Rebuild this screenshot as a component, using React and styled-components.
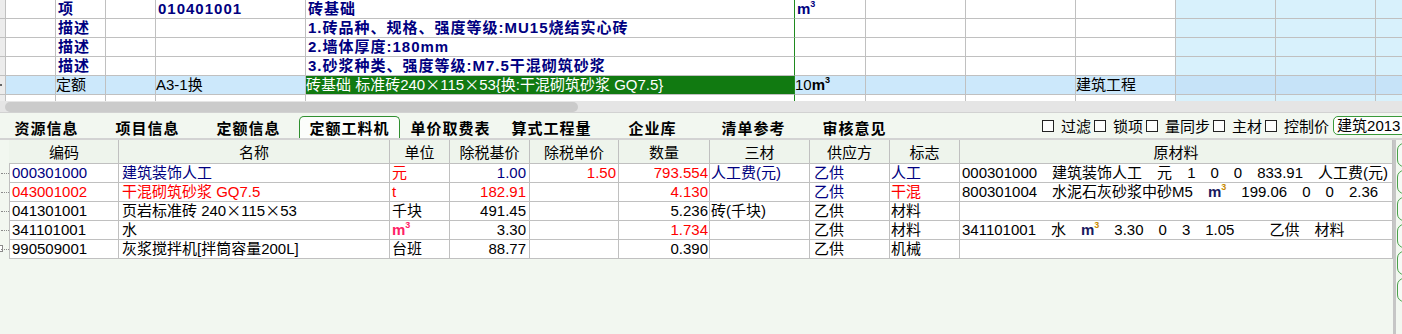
import React from 'react';
import styled, { createGlobalStyle } from 'styled-components';

const FONT = `"Liberation Sans", "Noto Sans CJK SC", sans-serif`;
const NAVY = '#000080';
const RED = '#ff0000';
const LINE = '#c0c0c0';
const PANEL = '#f2f7f0';

const GlobalStyle = createGlobalStyle`
  html, body { margin: 0; padding: 0; background: ${PANEL}; }
  body { width: 1402px; height: 334px; overflow: hidden; font-family: ${FONT}; }
`;

const Root = styled.div`
  width: 1402px;
  height: 334px;
  overflow: hidden;
  display: flex;
  flex-direction: column;
  background: ${PANEL};
  font-family: ${FONT};
  font-size: 15px;
  color: #000;
`;

const Wide = styled.span`
  font-family: "Noto Sans CJK SC", sans-serif;
  line-height: 1;
`;

/* ---------- top grid ---------- */
const TopGrid = styled.div`
  height: 101px;
  flex-shrink: 0;
  overflow: hidden;
  background: #fff;
  display: flex;
  flex-direction: column;
`;

const GridRow = styled.div`
  display: flex;
  height: 19px;
  flex-shrink: 0;
`;

const RowHead = styled.div`
  width: 6px;
  flex-shrink: 0;
  box-sizing: border-box;
  background: #ececec;
  border-right: 1px solid ${LINE};
  border-bottom: 1px solid ${LINE};
  position: relative;
`;

const RowDot = styled.span`
  position: absolute;
  left: 0;
  top: 8px;
  width: 2px;
  height: 2px;
  background: #666;
`;

const cellBg = (p) => {
  if (p.$highlight) return '#117a11';
  if (p.$selected && p.$blue) return '#c6e3f8';
  if (p.$selected) return '#cce8fb';
  if (p.$blue) return '#d8f1fc';
  return '#fff';
};

const GridCell = styled.div`
  width: ${(p) => p.$w}px;
  flex-shrink: 0;
  box-sizing: border-box;
  padding-left: ${(p) => (p.$selected ? 0 : 2)}px;
  border-right: 1px solid ${(p) => (p.$greenEdge ? '#1f8a1f' : LINE)};
  border-bottom: 1px solid ${LINE};
  background: ${cellBg};
  color: ${(p) => (p.$highlight ? '#fff' : p.$bold ? NAVY : '#000')};
  font-weight: ${(p) => (p.$bold ? 700 : 400)};
  letter-spacing: ${(p) => (p.$bold ? '1px' : '0')};
  line-height: 18px;
  white-space: nowrap;
`;

const Cubic = styled.span`
  font-weight: 700;
  color: ${(p) => p.$c};
  letter-spacing: 0;
  & sup {
    font-size: 9px;
    line-height: 1;
    vertical-align: top;
    color: ${(p) => p.$sc || p.$c};
  }
`;

/* ---------- scroll bar ---------- */
const HScroll = styled.div`
  height: 12px;
  flex-shrink: 0;
  background: #e5e5e5;
  border-bottom: 1px solid #d2d2d2;
  box-sizing: border-box;
  display: flex;
  align-items: center;
  padding-left: 5px;
`;

const Thumb = styled.div`
  width: 573px;
  height: 10px;
  border-radius: 5px;
  background: #cbcbcb;
`;

/* ---------- tab bar ---------- */
const TabBar = styled.div`
  height: 25px;
  flex-shrink: 0;
  display: flex;
  align-items: flex-end;
  background: ${PANEL};
`;

const Tab = styled.div`
  width: 101px;
  flex-shrink: 0;
  height: 22px;
  box-sizing: border-box;
  display: flex;
  align-items: center;
  justify-content: center;
  font-family: "Noto Sans CJK SC", sans-serif;
  font-weight: 700;
  letter-spacing: 1px;
  border: 1px solid ${(p) => (p.$active ? '#2f8f2f' : 'transparent')};
  border-bottom: none;
  border-radius: 5px 5px 0 0;
  background: ${(p) => (p.$active ? '#fbfdfb' : 'transparent')};
  &:first-child { margin-left: -4px; }
`;

const Options = styled.div`
  display: flex;
  align-items: center;
  flex-shrink: 0;
  height: 25px;
  margin-left: 137px;
  gap: 3px;
`;

const Option = styled.label`
  display: flex;
  align-items: center;
  gap: 7px;
  white-space: nowrap;
`;

const Box = styled.span`
  width: 12px;
  height: 12px;
  box-sizing: border-box;
  border: 1px solid #222;
  background: #fdfefd;
`;

const SelectBox = styled.div`
  margin-left: 1px;
  width: 90px;
  height: 19px;
  box-sizing: border-box;
  flex-shrink: 0;
  border: 1px solid #3a9a3a;
  border-radius: 5px;
  padding-left: 3px;
  line-height: 17px;
  background: #fff;
  white-space: nowrap;
`;

const Divider = styled.div`
  height: 2px;
  flex-shrink: 0;
  background: #d3d3d3;
`;

/* ---------- lower table ---------- */
const Lower = styled.div`
  flex: 1;
  min-height: 0;
  display: flex;
`;

const Gutter = styled.div`
  width: 9px;
  flex-shrink: 0;
  padding-top: 24px;
  display: flex;
  flex-direction: column;
`;

const GutterMark = styled.div`
  height: 19px;
  position: relative;
  &::after {
    content: '';
    position: absolute;
    left: 1px;
    right: 0;
    top: 9px;
    border-top: 1px dotted #8a8a8a;
  }
`;

const Expander = styled.span`
  position: absolute;
  left: -4px;
  top: 5px;
  width: 7px;
  height: 7px;
  box-sizing: border-box;
  border: 1px solid #8a8a8a;
  background: #fff;
`;

const Table = styled.div`
  width: 1384px;
  flex-shrink: 0;
  display: flex;
  flex-direction: column;
`;

const HeadRow = styled.div`
  display: flex;
  height: 24px;
  box-sizing: border-box;
  border-bottom: 1px solid ${LINE};
  background: #eef4ec;
  padding-left: 1px;
`;

const HeadCell = styled.div`
  width: ${(p) => p.$w}px;
  flex-shrink: 0;
  box-sizing: border-box;
  border-right: 1px solid ${LINE};
  display: flex;
  align-items: center;
  justify-content: center;
  white-space: nowrap;
`;

const DataRow = styled.div`
  display: flex;
  height: 19px;
  box-sizing: border-box;
  border-left: 1px solid ${LINE};
  border-bottom: 1px solid ${LINE};
  background: #fff;
`;

const DataCell = styled.div`
  width: ${(p) => p.$w}px;
  flex-shrink: 0;
  box-sizing: border-box;
  border-right: 1px solid ${LINE};
  padding: 0 ${(p) => p.$pr}px 0 ${(p) => p.$pl}px;
  text-align: ${(p) => p.$align};
  color: ${(p) => p.$color};
  line-height: 18px;
  white-space: nowrap;
  overflow-x: ${(p) => (p.$clip ? 'clip' : 'visible')};
`;

const RawLine = styled.div`
  display: flex;
  gap: 15px;
  white-space: nowrap;
`;

const RawPart = styled.span`
  flex-shrink: 0;
  margin-left: ${(p) => p.$extra || 0}px;
`;

const VBar = styled.div`
  width: 3px;
  flex-shrink: 0;
  background: #c6c6c6;
`;

const SideTools = styled.div`
  flex-shrink: 0;
  padding: 3px 0 0 1px;
  display: flex;
  flex-direction: column;
  gap: 3px;
`;

const SideButton = styled.div`
  width: 20px;
  height: 24px;
  box-sizing: border-box;
  border: 1px solid #4aa04a;
  border-radius: 7px;
  background: #f6faf5;
`;

/* ---------- helpers ---------- */
const fmt = (s) => {
  if (typeof s !== 'string' || !s.includes('×')) return s;
  const parts = s.split('×');
  const out = [];
  parts.forEach((p, i) => {
    if (i) out.push(<Wide key={`w${i}`}>×</Wide>);
    out.push(p);
  });
  return out;
};

/* ---------- data ---------- */
const topWidths = [50, 50, 50, 150, 489, 71, 100, 110, 100, 100, 100, 100];

const topRows = [
  { kind: 'bold', cells: { 1: '项', 3: '010401001', 4: '砖基础', 5: 'M3' } },
  { kind: 'bold', cells: { 1: '描述', 4: '1.砖品种、规格、强度等级:MU15烧结实心砖' } },
  { kind: 'bold', cells: { 1: '描述', 4: '2.墙体厚度:180mm' } },
  { kind: 'bold', cells: { 1: '描述', 4: '3.砂浆种类、强度等级:M7.5干混砌筑砂浆' } },
  {
    kind: 'selected',
    cells: {
      1: '定额',
      3: 'A3-1换',
      4: '砖基础 标准砖240×115×53{换:干混砌筑砂浆 GQ7.5}',
      5: '10M3',
      8: '建筑工程',
    },
  },
  { kind: 'plain', cells: {} },
];

const renderTop = (v) => {
  if (v === 'M3')
    return (
      <Cubic $c={NAVY}>
        m<sup>3</sup>
      </Cubic>
    );
  if (v === '10M3')
    return (
      <>
        10
        <Cubic $c="#000">
          m<sup>3</sup>
        </Cubic>
      </>
    );
  return fmt(v);
};

const tabs = ['资源信息', '项目信息', '定额信息', '定额工料机', '单价取费表', '算式工程量', '企业库', '清单参考', '审核意见'];
const options = ['过滤', '锁项', '量同步', '主材', '控制价'];

const cols = [
  { w: 109, title: '编码', pl: 2, pr: 0, align: 'left' },
  { w: 271, title: '名称', pl: 3, pr: 0, align: 'left' },
  { w: 60, title: '单位', pl: 2, pr: 0, align: 'left' },
  { w: 80, title: '除税基价', pl: 0, pr: 3, align: 'right' },
  { w: 89, title: '除税单价', pl: 0, pr: 2, align: 'right' },
  { w: 91, title: '数量', pl: 0, pr: 1, align: 'right' },
  { w: 100, title: '三材', pl: 1, pr: 0, align: 'left' },
  { w: 80, title: '供应方', pl: 4, pr: 0, align: 'left' },
  { w: 70, title: '标志', pl: 1, pr: 0, align: 'left' },
  { w: 433, title: '原材料', pl: 2, pr: 0, align: 'left' },
];

const RawM3 = () => (
  <Cubic $c="#1a1a60" $sc="#c88a00">
    m<sup>3</sup>
  </Cubic>
);

const UnitM3 = () => (
  <Cubic $c="#ff2266">
    m<sup>3</sup>
  </Cubic>
);

const K = '#000';
const rows = [
  {
    cells: [
      ['000301000', NAVY], ['建筑装饰人工', NAVY], ['元', RED], ['1.00', NAVY], ['1.50', RED],
      ['793.554', RED], ['人工费(元)', NAVY], ['乙供', NAVY], ['人工', NAVY],
    ],
    raw: ['000301000', '建筑装饰人工', '元', '1', '0', '0', '833.91', '人工费(元)'],
  },
  {
    cells: [
      ['043001002', RED], ['干混砌筑砂浆 GQ7.5', RED], ['t', RED], ['182.91', RED], ['', K],
      ['4.130', RED], ['', K], ['乙供', NAVY], ['干混', RED],
    ],
    raw: ['800301004', '水泥石灰砂浆中砂M5', 'M3', '199.06', '0', '0', '2.36'],
  },
  {
    cells: [
      ['041301001', K], ['页岩标准砖 240×115×53', K], ['千块', K], ['491.45', K], ['', K],
      ['5.236', K], ['砖(千块)', K], ['乙供', K], ['材料', K],
    ],
    raw: [],
  },
  {
    cells: [
      ['341101001', K], ['水', K], ['M3', K], ['3.30', K], ['', K],
      ['1.734', RED], ['', K], ['乙供', K], ['材料', K],
    ],
    raw: ['341101001', '水', 'M3', '3.30', '0', '3', '1.05', ['乙供', 20], '材料'],
  },
  {
    cells: [
      ['990509001', K], ['灰浆搅拌机[拌筒容量200L]', K], ['台班', K], ['88.77', K], ['', K],
      ['0.390', K], ['', K], ['乙供', K], ['机械', K],
    ],
    raw: [],
  },
];

export default function App() {
  return (
    <>
      <GlobalStyle />
      <Root>
        <TopGrid>
          {topRows.map((r, ri) => (
            <GridRow key={ri}>
              <RowHead>{r.kind === 'selected' && <RowDot />}</RowHead>
              {topWidths.map((w, ci) => (
                <GridCell
                  key={ci}
                  $w={w}
                  $bold={r.kind === 'bold'}
                  $blue={ci >= 9}
                  $selected={r.kind === 'selected'}
                  $highlight={r.kind === 'selected' && ci === 4}
                  $greenEdge={ci === 4}
                >
                  {renderTop(r.cells[ci])}
                </GridCell>
              ))}
            </GridRow>
          ))}
        </TopGrid>

        <HScroll>
          <Thumb />
        </HScroll>

        <TabBar>
          {tabs.map((t) => (
            <Tab key={t} $active={t === '定额工料机'}>
              {t}
            </Tab>
          ))}
          <Options>
            {options.map((o) => (
              <Option key={o}>
                <Box />
                {o}
              </Option>
            ))}
            <SelectBox>建筑2013</SelectBox>
          </Options>
        </TabBar>

        <Divider />

        <Lower>
          <Gutter>
            {rows.map((_, i) => (
              <GutterMark key={i}>{i === rows.length - 1 && <Expander />}</GutterMark>
            ))}
          </Gutter>
          <Table>
            <HeadRow>
              {cols.map((c) => (
                <HeadCell key={c.title} $w={c.w}>
                  {c.title}
                </HeadCell>
              ))}
            </HeadRow>
            {rows.map((r, ri) => (
              <DataRow key={ri}>
                {cols.map((c, ci) => {
                  if (ci === 9) {
                    return (
                      <DataCell key={ci} $clip $w={c.w} $pl={c.pl} $pr={c.pr} $align={c.align} $color={K}>
                        <RawLine>
                          {r.raw.map((p, pi) => {
                            const [txt, extra] = Array.isArray(p) ? p : [p, 0];
                            return (
                              <RawPart key={pi} $extra={extra}>
                                {txt === 'M3' ? <RawM3 /> : txt}
                              </RawPart>
                            );
                          })}
                        </RawLine>
                      </DataCell>
                    );
                  }
                  const [txt, color] = r.cells[ci];
                  return (
                    <DataCell key={ci} $w={c.w} $pl={c.pl} $pr={c.pr} $align={c.align} $color={color}>
                      {txt === 'M3' ? <UnitM3 /> : fmt(txt)}
                    </DataCell>
                  );
                })}
              </DataRow>
            ))}
          </Table>
          <VBar />
          <SideTools>
            {[0, 1, 2, 3, 4, 5].map((i) => (
              <SideButton key={i} />
            ))}
          </SideTools>
        </Lower>
      </Root>
    </>
  );
}
